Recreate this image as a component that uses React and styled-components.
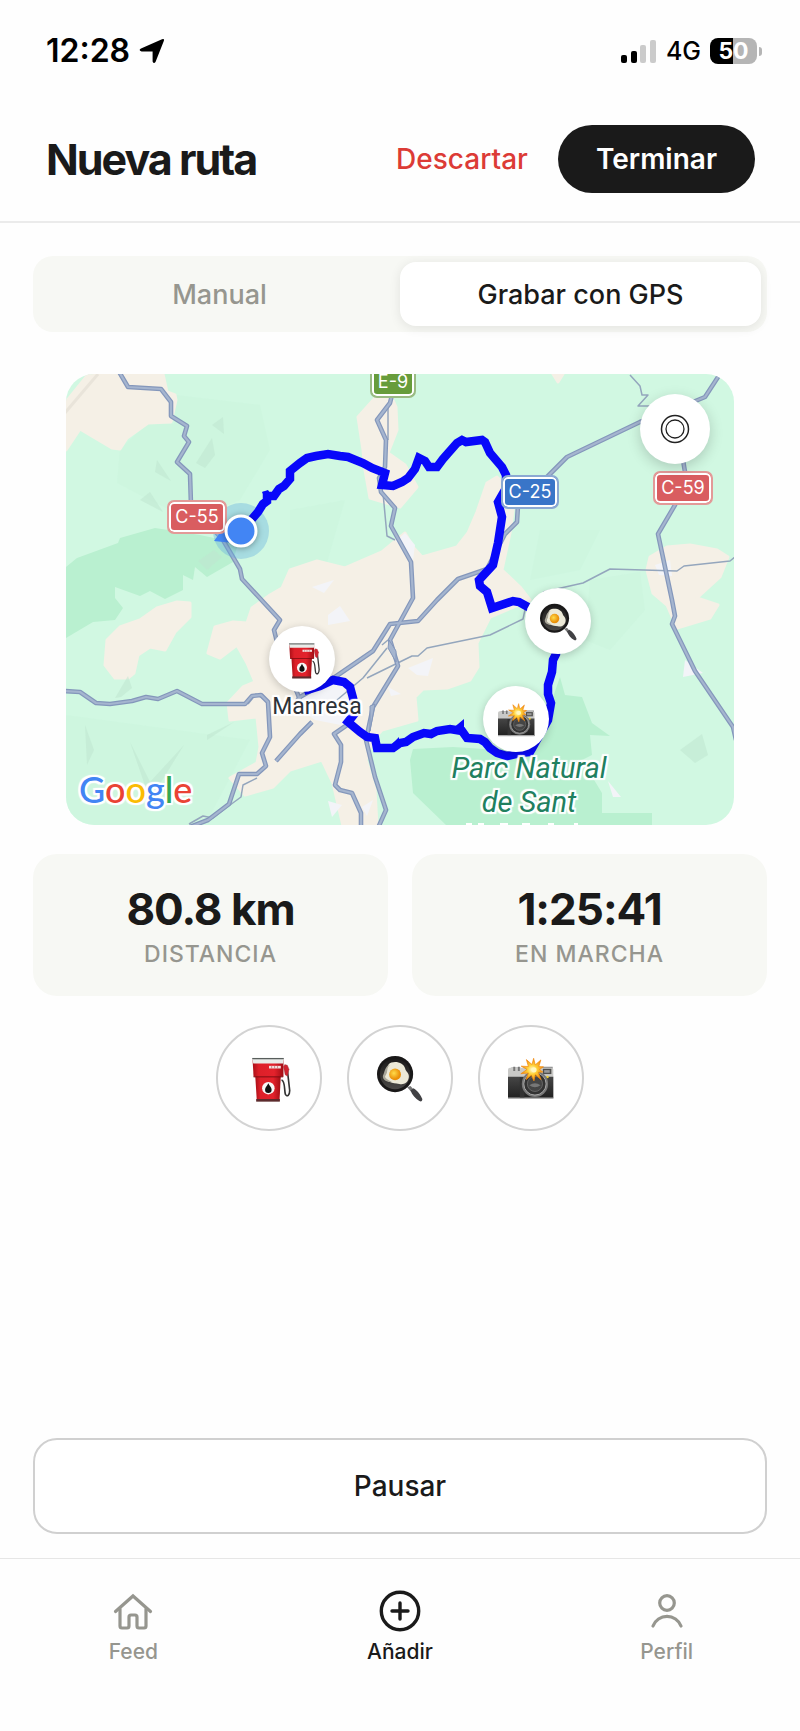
import React, { useState } from "react";
import styled, { createGlobalStyle, css } from "styled-components";

const GlobalStyle = createGlobalStyle`
  *, *::before, *::after { box-sizing: border-box; }
  body {
    margin: 0;
    background: #fefefe;
    color: #1a1a1a;
    font-family: Inter, "Liberation Sans", sans-serif;
    -webkit-font-smoothing: antialiased;
  }
  button { font-family: inherit; color: inherit; cursor: pointer; }
`;

const Screen = styled.div`
  display: flex;
  flex-direction: column;
  min-height: 100vh;
`;

/* ---------- Status bar ---------- */

const StatusBar = styled.div`
  display: flex;
  align-items: center;
  justify-content: space-between;
  height: 102px;
  padding: 0 38px 0 46px;
  color: #000;
`;

const StatusGroup = styled.div`
  display: flex;
  align-items: center;
  gap: 9px;
`;

const Clock = styled.time`
  font-size: 32px;
  font-weight: 600;
  line-height: 32px;
`;

const Network = styled.span`
  font-size: 25px;
  font-weight: 500;
  line-height: 32px;
`;

const Battery = styled.div`
  display: flex;
  align-items: center;
  gap: 2px;
`;

const BatteryBody = styled.span`
  width: 47px;
  height: 26px;
  border-radius: 8px;
  background: linear-gradient(90deg, #000 50%, #b5b5b5 50%);
  color: #fff;
  font-size: 23px;
  font-weight: 700;
  line-height: 26px;
  text-align: center;
`;

const BatteryTip = styled.span`
  width: 3px;
  height: 9px;
  border-radius: 0 4px 4px 0;
  background: #b5b5b5;
`;

/* ---------- Header ---------- */

const Header = styled.header`
  display: flex;
  align-items: center;
  justify-content: space-between;
  padding: 23px 45px 28px 46px;
  border-bottom: 2px solid #ebebeb;
`;

const Title = styled.h1`
  margin: 0;
  font-size: 43px;
  font-weight: 700;
  line-height: 52px;
  letter-spacing: -2px;
`;

const HeaderActions = styled.div`
  display: flex;
  align-items: center;
  gap: 30px;
`;

const TextButton = styled.button`
  padding: 0;
  border: 0;
  background: none;
  color: #dc3b36;
  font-size: 28px;
  font-weight: 500;
`;

const PillButton = styled.button`
  height: 68px;
  padding: 0 38px;
  border: 0;
  border-radius: 34px;
  background: #1a1a1a;
  color: #fff;
  font-size: 28px;
  font-weight: 600;
`;

/* ---------- Main ---------- */

const Main = styled.main`
  flex: 1;
  display: flex;
  flex-direction: column;
  padding: 33px 33px 24px;
`;

const Segmented = styled.div`
  display: grid;
  grid-template-columns: 1fr 1fr;
  height: 76px;
  padding: 6px;
  border-radius: 20px;
  background: #f7f8f4;
`;

const Segment = styled.button`
  border: 0;
  border-radius: 16px;
  background: none;
  color: #96968f;
  font-size: 27px;
  font-weight: 500;
  ${(p) =>
    p.$active &&
    css`
      background: #fff;
      color: #1a1a1a;
      box-shadow: 0 2px 12px rgba(0, 0, 0, 0.09);
    `}
`;

/* ---------- Map ---------- */

const MAP = { x: 66, y: 374, w: 668, h: 451 };

const MapCard = styled.section`
  position: relative;
  margin: 42px 33px 29px;
  aspect-ratio: ${MAP.w} / ${MAP.h};
  border-radius: 28px;
  overflow: hidden;
  background: #d1f8e2;
`;

const MapSvg = styled.svg`
  display: block;
  width: 100%;
  height: 100%;
`;

const placed = css`
  position: absolute;
  left: calc(${(p) => p.$x - MAP.x} / ${MAP.w} * 100%);
  top: calc(${(p) => p.$y - MAP.y} / ${MAP.h} * 100%);
  transform: translate(-50%, -50%);
`;

const Shield = styled.span`
  ${placed}
  display: flex;
  align-items: center;
  justify-content: center;
  width: ${(p) => p.$w}px;
  height: 34px;
  border: 2px solid ${(p) => p.$edge};
  border-radius: 7px;
  background: ${(p) => p.$color};
  box-shadow: inset 0 0 0 2px #fff;
  color: #fff;
  font-size: 18px;
  line-height: 14px;
`;

/* A shield that hangs from the upper edge of the map. */
const TopShield = styled(Shield)`
  height: 24px;
  padding-bottom: 6px;
  border-top: 0;
  border-radius: 0 0 7px 7px;
  box-shadow: inset 2px 0 #fff, inset -2px 0 #fff, inset 0 -2px #fff;
`;

const halo = "0 0 2px #fff, 2px 0 1px #fff, -2px 0 1px #fff, 0 2px 1px #fff, 0 -2px 1px #fff, 2px 2px 1px #fff, -2px -2px 1px #fff, 2px -2px 1px #fff, -2px 2px 1px #fff";

const PlaceLabel = styled.span`
  ${placed}
  color: #2d3238;
  font-family: Roboto, "Liberation Sans", sans-serif;
  font-size: 23px;
  line-height: 28px;
  white-space: nowrap;
  text-shadow: ${halo};
`;

const ParkLabel = styled(PlaceLabel)`
  color: #21805f;
  font-size: 29px;
  font-style: italic;
  line-height: 34px;
  text-align: center;
`;

const Pin = styled.span`
  ${placed}
  display: flex;
  align-items: center;
  justify-content: center;
  width: 66px;
  height: 66px;
  border-radius: 50%;
  background: #fff;
  box-shadow: 0 2px 8px rgba(0, 0, 0, 0.2);
`;

const UserDot = styled.span`
  ${placed}
  width: 33px;
  height: 33px;
  border: 3px solid #fff;
  border-radius: 50%;
  background: #4285f4;
  box-shadow: 0 1px 6px rgba(0, 0, 0, 0.35);
`;

const LocateButton = styled.button`
  position: absolute;
  top: 20px;
  right: 24px;
  display: flex;
  align-items: center;
  justify-content: center;
  width: 70px;
  height: 70px;
  padding: 0;
  border: 0;
  border-radius: 50%;
  background: #fff;
  box-shadow: 0 4px 14px rgba(0, 0, 0, 0.18);
`;

const MapBrand = styled.span`
  position: absolute;
  left: 13px;
  bottom: 14px;
  font-family: Lato, "Liberation Sans", sans-serif;
  font-size: 36px;
  font-weight: 500;
  line-height: 44px;
  text-shadow: ${halo};
`;

const Letter = styled.span`
  color: ${(p) => p.$c};
`;

/* ---------- Stats ---------- */

const Stats = styled.section`
  display: grid;
  grid-template-columns: 1fr 1fr;
  gap: 24px;
`;

const StatCard = styled.div`
  display: flex;
  flex-direction: column;
  align-items: center;
  justify-content: center;
  gap: 3px;
  height: 142px;
  border-radius: 24px;
  background: #f7f8f4;
`;

const StatValue = styled.strong`
  font-size: 44px;
  font-weight: 700;
  line-height: 54px;
  letter-spacing: -1px;
`;

const StatLabel = styled.span`
  color: #96968f;
  font-size: 23px;
  font-weight: 500;
  line-height: 30px;
  letter-spacing: 1px;
`;

/* ---------- Stops and pause ---------- */

const Stops = styled.div`
  display: flex;
  justify-content: center;
  gap: 25px;
  margin: 29px 0;
`;

const StopButton = styled.button`
  display: flex;
  align-items: center;
  justify-content: center;
  width: 106px;
  height: 106px;
  padding: 0;
  border: 2px solid #d3d3d3;
  border-radius: 50%;
  background: #fff;
`;

const PauseButton = styled.button`
  height: 96px;
  margin-top: auto;
  border: 2px solid #d0d0d0;
  border-radius: 24px;
  background: #fff;
  font-size: 28px;
  font-weight: 500;
`;

/* ---------- Bottom navigation ---------- */

const TabBar = styled.nav`
  display: grid;
  grid-template-columns: repeat(3, 1fr);
  height: 173px;
  padding-top: 30px;
  border-top: 1px solid #e6e6e6;
`;

const TabLink = styled.a`
  display: flex;
  flex-direction: column;
  align-items: center;
  gap: 6px;
  height: 80px;
  color: ${(p) => (p.$active ? "#1a1a1a" : "#96968f")};
  font-size: 21px;
  font-weight: 500;
  line-height: 26px;
  text-decoration: none;
`;

/* ---------- Icons ---------- */

const FuelIcon = ({ size }) => (
  <svg width={size} height={size} viewBox="0 0 140 140" overflow="visible" aria-hidden="true">
    <defs>
      <linearGradient id="fuelRed" x1="0" x2="1">
        <stop offset="0" stopColor="#a90f17" />
        <stop offset=".2" stopColor="#dd2029" />
        <stop offset=".7" stopColor="#e3222c" />
        <stop offset="1" stopColor="#a00d14" />
      </linearGradient>
    </defs>
    <path d="M108 76c12 2 8 34 12 44 5 9 13 2 13-12L125 38" fill="none" stroke="#333" strokeWidth="5" />
    <path d="M114 36l4-7 8 2 5 12-5 22-7-5z" fill="#cf2430" stroke="#8e3d40" strokeWidth="1" />
    <path d="M28 62h78l-4 78H33z" fill="url(#fuelRed)" />
    <path d="M31 134h72v8H31z" fill="#5c2b2d" />
    <path d="M20 14h94v52H23z" fill="url(#fuelRed)" />
    <path d="M19 9h96l-2 17H22z" fill="#e9ece9" />
    <path d="M19 9h96v4H19z" fill="#585e5c" />
    <path d="M23 65h90v3H23z" fill="#7d0d12" />
    <path d="M70 33h36v8H70z" fill="#f3dfdf" />
    <path d="M78 33v8m9-8v8m9-8v8" stroke="#b66" strokeWidth="2" />
    <circle cx="68" cy="101" r="19" fill="#f7f7f7" />
    <path d="M68 86c3 8 10 12 10 20a10 10 0 0 1-20 0c0-8 7-12 10-20z" fill="#111" />
  </svg>
);

const PanIcon = ({ size }) => (
  <svg width={size} height={size} viewBox="0 0 140 140" overflow="visible" aria-hidden="true">
    <defs>
      <radialGradient id="yolk" cx=".4" cy=".4">
        <stop offset="0" stopColor="#ffdc4a" />
        <stop offset="1" stopColor="#eb9009" />
      </radialGradient>
      <linearGradient id="panIron" x1="0" y1="0" x2="0" y2="1">
        <stop offset="0" stopColor="#1c1b1b" />
        <stop offset="1" stopColor="#4a4846" />
      </linearGradient>
    </defs>
    <path d="M92 98l10-4 10 12-8 6z" fill="#777" />
    <path d="M102 108l9-7c13 7 23 22 27 33 0 7-4 9-9 6-12-7-22-18-27-32z" fill="#414144" />
    <circle cx="55" cy="58" r="55" fill="#191818" />
    <circle cx="55" cy="58" r="46" fill="url(#panIron)" />
    <path d="M44 23c17-5 38 2 42 19 1 8 12 12 11 25-2 18-16 24-29 21-12-2-20-2-29-6-11-3-17-8-15-17 2-8 4-9 5-16 1-11 4-23 15-26z" fill="#ece9d7" />
    <path d="M40 30c-14 11-4 22-15 33-3 9 13 14 20 19-16 1-29-7-27-19 6-10 5-29 22-33z" fill="#aaa79a" />
    <circle cx="55" cy="59" r="18" fill="url(#yolk)" />
  </svg>
);

const CameraIcon = ({ size }) => (
  <svg width={size} height={size} viewBox="0 0 140 140" overflow="visible" aria-hidden="true">
    <defs>
      <linearGradient id="camBody" x1="0" y1="0" x2="0" y2="1">
        <stop offset="0" stopColor="#464646" />
        <stop offset="1" stopColor="#202020" />
      </linearGradient>
      <radialGradient id="flash">
        <stop offset="0" stopColor="#fffbd0" />
        <stop offset=".4" stopColor="#ffd23a" />
        <stop offset="1" stopColor="#f28a0e" />
      </radialGradient>
    </defs>
    <path d="M10 38h28v10H10zM104 36h32v22h-32z" fill="#8a8a8a" />
    <path d="M0 45q0-6 6-6h126q6 0 6 6v23H0z" fill="#c9c9c7" />
    <path d="M16 36h6v13h-6zm14 0h6v13h-6z" fill="#777" />
    <path d="M0 66h138v66H0z" fill="url(#camBody)" />
    <path d="M0 129h138v4H0z" fill="#aaa" />
    <path d="M106 42h26v16h-26z" fill="#50504e" />
    <path d="M110 46h17v8h-17z" fill="#999" />
    <circle cx="120" cy="67" r="4" fill="#f0cf32" />
    <path d="M36 68h14v61H36z" fill="#323232" />
    <circle cx="82" cy="88" r="40" fill="#777" />
    <circle cx="82" cy="88" r="34" fill="#333" stroke="#aaa" strokeWidth="3" />
    <circle cx="82" cy="88" r="23" fill="#454545" stroke="#666" strokeWidth="3" />
    <path d="M65 92q17-12 34 0-17 12-34 0z" fill="#777" />
    <path d="M78 10l5 20 17-15-6 20 14 1-12 8 10 8-14 1 9 22-18-15-4 19-8-17-16 13 7-20-23 2 19-13-18-10 22 1-6-21 17 15z" fill="url(#flash)" stroke="#ef860b" strokeWidth="2" />
    <circle cx="79" cy="45" r="8" fill="#fff8c0" />
  </svg>
);

const LocationArrow = () => (
  <svg width="26" height="26" viewBox="0 0 26 26" aria-hidden="true">
    <path d="M2 10.500 23 1.200q2.800-.8 1.800 1.800L16.500 24q-1.700 2.400-2.900-.4V13.400H2.600Q-1 12.500 2 10.500z" fill="#000" />
  </svg>
);

const SignalIcon = () => (
  <svg width="36" height="24" viewBox="0 0 36 24" aria-hidden="true">
    <rect x="0" y="16" width="6" height="8" rx="2" fill="#000" />
    <rect x="10" y="12" width="6" height="12" rx="2" fill="#000" />
    <rect x="19" y="6" width="6" height="18" rx="2" fill="#cbcbcb" />
    <rect x="29" y="1" width="6" height="23" rx="2" fill="#cbcbcb" />
  </svg>
);

const TargetIcon = () => (
  <svg width="30" height="30" viewBox="0 0 30 30" fill="none" stroke="#222" aria-hidden="true">
    <circle cx="15" cy="15" r="13.500" strokeWidth="1.500" />
    <circle cx="15" cy="15" r="9" strokeWidth="1.300" />
  </svg>
);

const TabIcon = ({ children, stroke }) => (
  <svg width="44" height="44" viewBox="0 0 44 44" fill="none" stroke="currentColor" strokeWidth={stroke} strokeLinecap="round" strokeLinejoin="round" aria-hidden="true">
    {children}
  </svg>
);

const HomeIcon = () => (
  <TabIcon stroke="3.200">
    <path d="M4.500 22.500 22 7l17.500 15.500" strokeLinejoin="miter" />
    <path d="M9 20v17q0 2 2 2h5q2 0 2-2V28q0-2 2-2h4q2 0 2 2v9q0 2 2 2h5q2 0 2-2V20" />
  </TabIcon>
);

const AddIcon = () => (
  <TabIcon stroke="3.400">
    <circle cx="22" cy="22" r="18.700" />
    <path d="M22 14v16M14 22h16" />
  </TabIcon>
);

const ProfileIcon = () => (
  <TabIcon stroke="3.200">
    <circle cx="22" cy="14" r="7.300" />
    <path d="M8 37a15 15 0 0 1 28 0" />
  </TabIcon>
);

/* ---------- Map drawing ---------- */

const majorRoads = [
  "118,370 128,387 161,389 171,402 171,416 187,426 184,436 189,442 177,462 190,474 191,505 223,540 240,569 242,579 280,620 274,630 277,642 300,700",
  "392,395 390,403 377,420 386,440 385,467 379,478 381,492 395,508 391,526 411,562 413,598 390,640 398,666 373,707 366,740 375,777 386,810 378,828",
  "720,374 705,397 693,402 640,422 567,457 540,484 518,505 517,522 505,534 487,569 458,579 437,600 418,621 390,624 373,651 335,677 300,697 290,710",
  "683,460 685,472 675,505 658,534 672,600 675,616 672,624 695,671 733,727 736,740",
  "64,691 80,692 96,703 110,704 132,701 146,697 158,699 177,691 202,704 245,704 252,696 261,695 268,702 270,737 262,753 266,766 257,774 239,774 229,804 208,820 190,827",
  "276,761 300,734 312,722",
  "347,725 334,734 341,745 341,762 335,785 340,790 352,793 361,813 361,828",
];

const minorRoads = [
  "388,403 388,440",
  "383,493 387,536 395,540",
  "630,375 640,386 642,395 648,395 638,406 650,406",
  "543,592 583,583 610,569 677,571 684,566 730,561 736,556",
  "367,678 412,656 418,656 427,648 490,635 523,619 526,605",
  "337,700 363,678 387,648",
  "257,778 243,785 241,797 226,808 213,818 203,816 189,824",
  "248,704 256,694 268,702",
  "382,645 388,640",
];

const towns = [
  "87,376 66,402 66,450 80,429 112,448 120,449 127,438 148,423 171,422 176,400 175,395 167,392 163,374 90,372",
  "190,603 190,617 175,632 165,650 150,647 138,655 134,673 128,678 115,678 105,665 107,640 120,627 140,620 157,608 177,602",
  "208,653 215,627 233,622 247,623 252,608 270,595 282,588 290,570 317,561 345,568 382,552 405,533 413,547 422,557 457,547 468,533 477,512 487,483 497,477 507,487 513,510 510,533 502,570 520,587 530,600 490,617 477,643 478,667 470,680 447,688 423,689 415,697 417,720 403,724 382,730 373,740 366,760 375,790 377,826 343,826 333,783 322,760 290,770 273,787 245,795 230,778 257,763 260,747 257,717 230,720 228,703 243,687 255,682 247,663 237,645 220,658",
  "375,398 358,417 363,450 365,470 370,498 400,507 417,487 405,465 388,453 397,430 396,407 392,398",
  "647,570 650,557 667,547 690,545 717,550 728,557 720,577 697,598 718,605 710,618 677,628 667,605 653,593",
  "553,374 563,374 558,382",
];

const forests = [
  "66,567 77,558 118,543 120,538 155,528 200,535 238,543 233,562 207,577 195,567 193,580 183,575 183,590 165,599 150,591 140,596 115,587 115,598 123,608 115,620 93,622 66,638",
  "410,760 413,749 453,747 500,750 545,720 560,677 565,695 582,697 592,723 610,736 590,735 592,755 582,760 602,793 602,813 652,813 652,826 447,826 413,793",
];

const paleShades = [
  "120,449 148,423 174,424 176,395 260,405 270,450 240,500 190,520 140,495 117,483",
  "290,510 345,500 325,570 290,568",
  "540,530 600,530 580,570 530,580",
  "590,580 640,572 645,610 610,650 585,640",
  "66,715 250,740 205,825 66,825",
];

const rocks = [
  "212,425 223,417 224,434", "212,438 215,455 205,468 196,463", "157,460 171,481 155,472", "140,500 150,492 163,512",
  "198,561 214,550 222,557 207,570", "680,750 702,734 708,755 695,763", "115,698 128,676 132,688 121,697",
  "207,735 234,722 207,740", "85,725 94,750 87,765", "130,742 150,782 184,745 150,800",
];

const industry = [
  "328,615 340,606 350,621 328,625", "408,668 433,658 428,676 417,675", "388,687 401,694 391,696", "312,587 334,580 324,593",
  "396,541 405,533 415,545 413,560", "328,801 342,805 332,817", "362,807 373,800 367,816", "685,660 703,673 683,677",
  "608,781 621,797 613,797", "300,692 342,682 354,719 346,726 315,720 298,708", "655,565 670,560 672,576 659,575",
];

const route =
  "252,519 258,512 263,504 267,501 267,496 274,496 279,489 284,486 290,479 290,471 300,463 307,458 316,456 328,454 340,456 348,457 363,463 372,468 385,473 382,485 393,486 402,482 408,478 415,469 419,458 425,461 429,467 437,467 443,459 457,443 462,440 466,442 482,440 485,442 490,453 502,467 506,475 506,488 498,502 502,517 500,530 498,543 493,565 479,580 480,586 487,592 492,608 513,601 519,602 528,607 545,612 558,630 556,654 553,660 552,672 548,685 548,694 551,703 548,720 530,752 520,753 507,756 497,753 490,748 485,742 480,739 467,738 462,731 450,729 437,731 431,734 424,733 413,737 406,742 400,743 393,748 377,748 375,738 367,737 360,732 348,722 356,712 353,698 350,687 344,682 333,680 320,686 304,691";

const MapDrawing = () => (
  <MapSvg viewBox={`${MAP.x} ${MAP.y} ${MAP.w} ${MAP.h}`} preserveAspectRatio="xMidYMid slice" aria-hidden="true">
    {paleShades.map((p) => <polygon key={p} points={p} fill="#cbf5dd" opacity=".6" />)}
    {forests.map((p) => <polygon key={p} points={p} fill="#b9f0d0" />)}
    {towns.map((p) => <polygon key={p} points={p} fill="#f5f0e6" stroke="#f5f0e6" strokeWidth="3" strokeLinejoin="round" />)}
    {rocks.map((p) => <polygon key={p} points={p} fill="#bfe5d0" opacity=".55" />)}
    {industry.map((p) => <polygon key={p} points={p} fill="#f3f4f8" />)}
    <path d="M64 414 98 374" stroke="#e9e4da" strokeWidth="3" />
    <g fill="none" strokeLinejoin="round">
      {minorRoads.map((p) => <polyline key={p} points={p} stroke="#94a6bd" strokeWidth="1.500" />)}
      {majorRoads.map((p) => <polyline key={p} points={p} stroke="#8497bb" strokeWidth="4.600" />)}
      {majorRoads.map((p) => <polyline key={p} points={p} stroke="#a5b5cf" strokeWidth="2.200" />)}
    </g>
    <path d="M389 640l7 11v11l-8-14zM370 706l5-2-5 27z" fill="#a5b5cf" stroke="#8497bb" strokeWidth="1" />
    <circle cx="241" cy="531" r="28" fill="#65aee0" opacity=".38" />
    <polyline points={route} fill="none" stroke="#0808fa" strokeWidth="8.500" strokeLinejoin="miter" />
    <path d="M464 719v15l-12-5zM262 492l6-2 4 6-6 4zM393 743l6-6v10z" fill="#0808fa" />
    <path d="M214 541l13-18 6 20z" fill="#4285f4" />
    <path d="M466 824h6m6 0h6m16 0h8m14 0h8m18 0h6m20 0h4" stroke="#fff" strokeWidth="2" />
  </MapSvg>
);

const stops = [
  { label: "Gasolina", Icon: FuelIcon, x: 302, y: 659 },
  { label: "Comida", Icon: PanIcon, x: 558, y: 621 },
  { label: "Foto", Icon: CameraIcon, x: 516, y: 719 },
];

const RouteMap = () => (
  <MapCard aria-label="Mapa">
    <MapDrawing />
    <TopShield $x={393} $y={386} $w={46} $color="#679c3b" $edge="#9abb83">E-9</TopShield>
    <Shield $x={197} $y={517} $w={60} $color="#d95d60" $edge="#e39a98">C-55</Shield>
    <Shield $x={530} $y={492} $w={58} $color="#3975c8" $edge="#8ba9d3">C-25</Shield>
    <Shield $x={683} $y={488} $w={60} $color="#d95d60" $edge="#e39a98">C-59</Shield>
    <UserDot $x={241} $y={531} />
    <PlaceLabel $x={317} $y={707}>Manresa</PlaceLabel>
    <ParkLabel $x={529} $y={785}>
      Parc Natural
      <br />
      de Sant
    </ParkLabel>
    {stops.map(({ label, Icon, x, y }) => (
      <Pin key={label} $x={x} $y={y}>
        <Icon size={37} />
      </Pin>
    ))}
    <MapBrand>
      <Letter $c="#4285f4">G</Letter>
      <Letter $c="#ea4335">o</Letter>
      <Letter $c="#fbbc05">o</Letter>
      <Letter $c="#4285f4">g</Letter>
      <Letter $c="#34a853">l</Letter>
      <Letter $c="#ea4335">e</Letter>
    </MapBrand>
    <LocateButton type="button" aria-label="Centrar">
      <TargetIcon />
    </LocateButton>
  </MapCard>
);

const tabs = [
  { label: "Feed", Icon: HomeIcon },
  { label: "Añadir", Icon: AddIcon, active: true },
  { label: "Perfil", Icon: ProfileIcon },
];

export default function App() {
  const [mode, setMode] = useState("Grabar con GPS");
  return (
    <Screen>
      <GlobalStyle />
      <StatusBar>
        <StatusGroup>
          <Clock>12:28</Clock>
          <LocationArrow />
        </StatusGroup>
        <StatusGroup>
          <SignalIcon />
          <Network>4G</Network>
          <Battery>
            <BatteryBody>50</BatteryBody>
            <BatteryTip />
          </Battery>
        </StatusGroup>
      </StatusBar>
      <Header>
        <Title>Nueva ruta</Title>
        <HeaderActions>
          <TextButton type="button">Descartar</TextButton>
          <PillButton type="button">Terminar</PillButton>
        </HeaderActions>
      </Header>
      <Main>
        <Segmented>
          {["Manual", "Grabar con GPS"].map((name) => (
            <Segment key={name} type="button" $active={mode === name} aria-pressed={mode === name} onClick={() => setMode(name)}>
              {name}
            </Segment>
          ))}
        </Segmented>
        <RouteMap />
        <Stats>
          <StatCard>
            <StatValue>80.8 km</StatValue>
            <StatLabel>DISTANCIA</StatLabel>
          </StatCard>
          <StatCard>
            <StatValue>1:25:41</StatValue>
            <StatLabel>EN MARCHA</StatLabel>
          </StatCard>
        </Stats>
        <Stops>
          {stops.map(({ label, Icon }) => (
            <StopButton key={label} type="button" aria-label={label}>
              <Icon size={46} />
            </StopButton>
          ))}
        </Stops>
        <PauseButton type="button">Pausar</PauseButton>
      </Main>
      <TabBar>
        {tabs.map(({ label, Icon, active }) => (
          <TabLink key={label} href="#" $active={active} aria-current={active ? "page" : undefined}>
            <Icon />
            {label}
          </TabLink>
        ))}
      </TabBar>
    </Screen>
  );
}
